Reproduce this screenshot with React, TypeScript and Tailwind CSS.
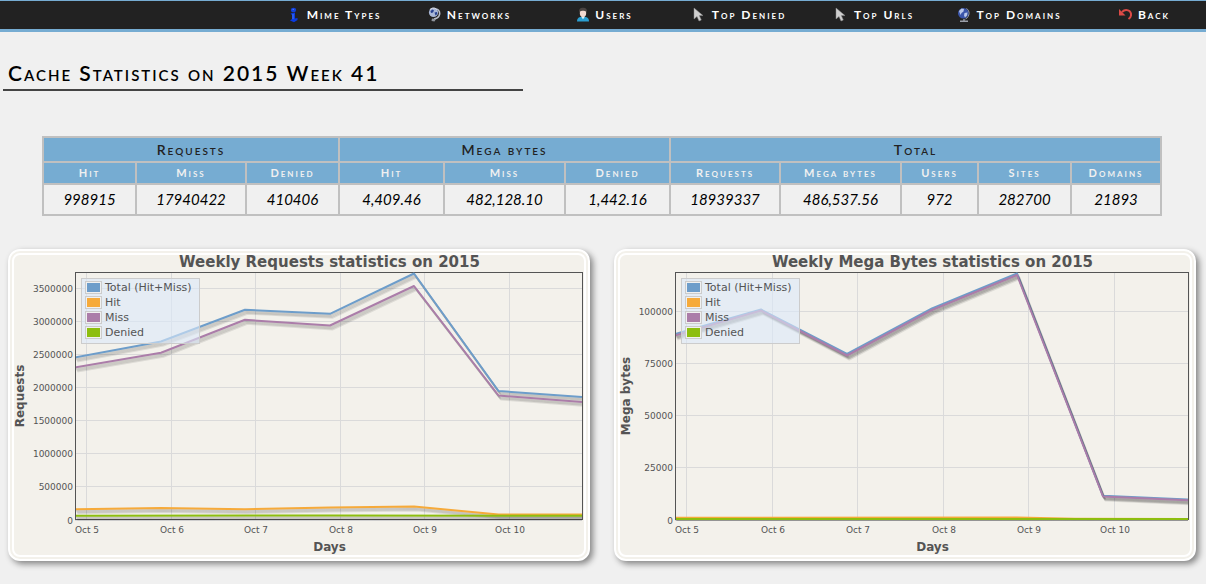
import { Fragment } from "react"

interface NavItem {
  name: string;
  icon: React.ReactNode;
}

interface Tick {
  pos: number;
  label: string;
}

interface Series {
  color: string;
  points: string;
}

interface ChartProps {
  title: string;
  yLabel: string;
  plotLeft: number;
  plotRight: number;
  xTicks: Tick[];
  yTicks: Tick[];
  series: Series[];
  legendClass: string;
}

const InfoIcon = () => (
  <svg width="14" height="16" viewBox="0 0 14 16" aria-hidden="true">
    <ellipse cx="5.500" cy="3" rx="2.600" ry="2.300" fill="#1240d8" />
    <path d="M2.500 6.500L7 5.500v6l2.500-.5v2L6 15.300 2 13.500l2-1.500V8z" fill="#0a3be0" />
    <path d="M4.500 2.400h1.500M5 7v5" stroke="#4a78f5" strokeWidth="1" />
  </svg>
)

const NetworkIcon = () => (
  <svg width="14" height="16" viewBox="0 0 14 16" aria-hidden="true">
    <path d="M8.500 2c3 1 4 4 2.500 7-1 2-2.500 2.500-5 3" fill="none" stroke="#b9bec9" strokeWidth="1.600" />
    <circle cx="5.500" cy="5.500" r="4.600" fill="#a9b7d6" />
    <path d="M2.500 4l2-1.500 1.500 1-1 2-2 .5zM6.500 5.500l2.500-.5.3 2-1.800 1.500z" fill="#27418f" />
    <path d="M2 2.500c2-2 5-2 7 0" stroke="#eef2fa" fill="none" />
    <path d="M4 11.500l4 .5-1.500 2.500-3-.5z" fill="#8f949c" />
  </svg>
)

const UserIcon = () => (
  <svg width="14" height="16" viewBox="0 0 14 16" aria-hidden="true">
    <path d="M1 14.500c0-3.500 2-4.700 6-4.700s6 1.200 6 4.700z" fill="#2b9ed0" />
    <path d="M5 9.500h4l-2 2.800z" fill="#d8f0fa" />
    <ellipse cx="7" cy="6" rx="3.200" ry="4" fill="#f2d9d0" />
    <path d="M3.200 5.500C2.500 2 4.500.8 7 .8s4.700 1.200 3.800 4.700C9.800 3.800 8 3.800 7 3.800s-2.800 0-3.800 1.700z" fill="#4a4442" />
  </svg>
)

const CursorIcon = () => (
  <svg width="14" height="16" viewBox="0 0 14 16" aria-hidden="true">
    <path d="M1 1v11l3-2.500 2 4.500 2.300-1-2-4.400H10z" fill="#cfcfcf" stroke="#8a8a8a" strokeWidth=".5" />
  </svg>
)

const GlobeIcon = () => (
  <svg width="14" height="16" viewBox="0 0 14 16" aria-hidden="true">
    <path d="M3 14.300h8M7 12v2.500" stroke="#9ba0aa" strokeWidth="1.400" />
    <path d="M9.500 1.500c3.500 2 3.500 8-1 10.500" fill="none" stroke="#a4a9b4" />
    <circle cx="6.300" cy="6.300" r="5.300" fill="#3a55ab" />
    <path d="M2 4l2.500-2.500 2.500.5-.5 2.500-2 1.500-1 2zM7.500 6l3-.5-.5 3-2 2-1-2z" fill="#b8c6e8" />
  </svg>
)

const BackIcon = () => (
  <svg width="14" height="16" viewBox="0 0 14 16" aria-hidden="true">
    <path d="M3 5c3.500-3.500 9.500-2 9 3.300-.2 1.500-1 2.700-2.500 3.700" fill="none" stroke="#dc4a46" strokeWidth="2" />
    <path d="M0 2v6.500h6.500z" fill="#dc4a46" />
  </svg>
)

const navItems: NavItem[] = [
  { name: "Mime Types", icon: <InfoIcon /> },
  { name: "Networks", icon: <NetworkIcon /> },
  { name: "Users", icon: <UserIcon /> },
  { name: "Top Denied", icon: <CursorIcon /> },
  { name: "Top Urls", icon: <CursorIcon /> },
  { name: "Top Domains", icon: <GlobeIcon /> },
  { name: "Back", icon: <BackIcon /> },
]

const columns = [
  { name: "Hit", value: "998915", width: "w-[93px]" },
  { name: "Miss", value: "17940422", width: "w-[110px]" },
  { name: "Denied", value: "410406", width: "w-[93px]" },
  { name: "Hit", value: "4,409.46", width: "w-[105px]" },
  { name: "Miss", value: "482,128.10", width: "w-[121px]" },
  { name: "Denied", value: "1,442.16", width: "w-[105px]" },
  { name: "Requests", value: "18939337", width: "w-[110px]" },
  { name: "Mega bytes", value: "486,537.56", width: "w-[121px]" },
  { name: "Users", value: "972", width: "w-[77px]" },
  { name: "Sites", value: "282700", width: "w-[93px]" },
  { name: "Domains", value: "21893", width: "w-[90px]" },
]

const legend = [
  { name: "Total (Hit+Miss)", color: "bg-[#6d9dca]" },
  { name: "Hit", color: "bg-[#f6aa3a]" },
  { name: "Miss", color: "bg-[#ab7da9]" },
  { name: "Denied", color: "bg-[#8dbe0f]" },
]

const charts: ChartProps[] = [
  {
    title: "Weekly Requests statistics on 2015",
    yLabel: "Requests",
    plotLeft: 61,
    plotRight: 568,
    legendClass: "left-[67px]",
    xTicks: [
      { pos: 72, label: "Oct 5" },
      { pos: 157, label: "Oct 6" },
      { pos: 241, label: "Oct 7" },
      { pos: 326, label: "Oct 8" },
      { pos: 410, label: "Oct 9" },
      { pos: 495, label: "Oct 10" },
    ],
    yTicks: [
      { pos: 33, label: "3500000" },
      { pos: 66, label: "3000000" },
      { pos: 99, label: "2500000" },
      { pos: 132, label: "2000000" },
      { pos: 165, label: "1500000" },
      { pos: 198, label: "1000000" },
      { pos: 231, label: "500000" },
      { pos: 265, label: "0" },
    ],
    series: [
      { color: "#6d9dca", points: "61,102.500 147,86.500 231,54.800 316,58.800 400,18.500 484.500,136 568,142" },
      { color: "#f6aa3a", points: "61,254.300 147,253 231,254.200 316,252.500 400,251.500 484.500,259.500 568,259.500" },
      { color: "#ab7da9", points: "61,112.500 147,97.800 231,64.800 316,70.500 400,31 484.500,140.500 568,147" },
      { color: "#8dbe0f", points: "61,260.800 316,260.500 568,260.800" },
    ],
  },
  {
    title: "Weekly Mega Bytes statistics on 2015",
    yLabel: "Mega bytes",
    plotLeft: 55,
    plotRight: 568,
    legendClass: "left-[61px]",
    xTicks: [
      { pos: 66, label: "Oct 5" },
      { pos: 152, label: "Oct 6" },
      { pos: 237, label: "Oct 7" },
      { pos: 323, label: "Oct 8" },
      { pos: 408, label: "Oct 9" },
      { pos: 494, label: "Oct 10" },
    ],
    yTicks: [
      { pos: 56, label: "100000" },
      { pos: 108, label: "75000" },
      { pos: 160, label: "50000" },
      { pos: 212, label: "25000" },
      { pos: 265, label: "0" },
    ],
    series: [
      { color: "#6d9dca", points: "55,79 141,54.500 227,99 312,53.500 397,18.500 483,240.800 568,244.500" },
      { color: "#f6aa3a", points: "55,262.700 397,262.500 455,263.700 568,264" },
      { color: "#ab7da9", points: "55,80.500 141,55.500 227,100.500 312,55 397,20 483,241.500 568,245.300" },
      { color: "#8dbe0f", points: "55,264 568,264" },
    ],
  },
]

function Chart ({ title, yLabel, plotLeft, plotRight, xTicks, yTicks, series, legendClass }: ChartProps) {
  const middle = (plotLeft + plotRight) / 2

  return (
    <section className="relative border-[6px] border-double border-white rounded-xl bg-[#f3f1eb] shadow-[3px_3px_6px_rgba(0,0,0,0.45)]">
      <svg className="block w-full overflow-visible" viewBox="0 0 570 300" fill="#545454" fontFamily="'DejaVu Sans', sans-serif" role="img" aria-label={title}>
        <text x={middle + 1} y="12" textAnchor="middle" fontSize="15" fontWeight="bold">{title}</text>
        <text x={middle + 1} y="296" textAnchor="middle" fontSize="12" fontWeight="bold">Days</text>
        <text transform="translate(10 141) rotate(-90)" textAnchor="middle" fontSize="12" fontWeight="bold">{yLabel}</text>

        {xTicks.map((tick) => (
          <Fragment key={tick.label}>
            <path d={`M${tick.pos + 0.5} 18V265`} stroke="#dadada" />
            <text x={tick.pos + 1} y="278" textAnchor="middle" fontSize="9">{tick.label}</text>
          </Fragment>
        ))}
        {yTicks.map((tick) => (
          <Fragment key={tick.label}>
            <path d={`M${plotLeft} ${tick.pos + 0.5}H${plotRight}`} stroke="#dadada" />
            <text x={plotLeft - 2} y={tick.pos + 4} textAnchor="end" fontSize="9">{tick.label}</text>
          </Fragment>
        ))}

        <rect x={plotLeft + 0.5} y="17.500" width={plotRight - plotLeft} height="247" fill="none" stroke="#545454" />

        <svg x={plotLeft + 1} y="17" width={plotRight - plotLeft - 1} height="249" viewBox={`${plotLeft + 1} 17 ${plotRight - plotLeft - 1} 249`}>
          {series.map((line) => (
            <g key={line.color} fill="none" strokeWidth="2" strokeLinejoin="round">
              {[1, 2, 3, 4].map((step) => (
                <polyline key={step} points={line.points} transform={`translate(${step * 0.6} ${step})`} stroke="#000" strokeOpacity=".09" />
              ))}
              <polyline points={line.points} stroke={line.color} />
            </g>
          ))}
        </svg>
      </svg>

      <ul className={`absolute top-[23px] flex flex-col w-[119px] h-[66px] gap-[2px] pt-[2px] pl-[3px] border border-[#ccc] bg-[#dce9fa]/60 font-['DejaVu_Sans',sans-serif] text-[11px] leading-[13px] text-[#545454] ${legendClass}`}>
        {legend.map((item) => (
          <li key={item.name} className="flex items-center gap-[3px] whitespace-nowrap">
            <span className="w-[17px] h-[13px] p-px border border-[#ccc] bg-[#f0f0f0]">
              <span className={`block w-full h-full ${item.color}`} />
            </span>
            {item.name}
          </li>
        ))}
      </ul>
    </section>
  )
}

export default function App () {
  return (
    <div className="min-h-screen bg-[#f0f0f0] font-[Lato,sans-serif] text-black">
      <nav className="flex justify-end h-8 gap-3 bg-[#222] border-t border-b-[3px] border-[#76acd2]">
        {navItems.map((item) => (
          <a key={item.name} href="#" className="flex items-center justify-center w-[123px] gap-[5px] text-[12px] font-bold tracking-[2px] text-white whitespace-nowrap [font-variant:small-caps]">
            {item.icon}
            {item.name}
          </a>
        ))}
      </nav>

      <h1 className="w-[520px] max-w-full mt-7 ml-[3px] pl-[5px] pb-1 border-b-2 border-[#444] text-[21px] leading-[25px] font-semibold tracking-[2px] whitespace-nowrap [font-variant:small-caps]">
        Cache Statistics on 2015 Week 41
      </h1>

      <div className="pl-[42px] pr-[44px] mt-[45px]">
        <table className="w-full text-center border-collapse table-fixed [&_td]:border-2 [&_th]:border-2 [&_td]:border-[#c0c0c0] [&_th]:border-[#c0c0c0]">
          <colgroup>
            {columns.map((column, i) => <col key={i} className={column.width} />)}
          </colgroup>
          <thead className="bg-[#76acd2] [font-variant:small-caps]">
            <tr className="h-[25px] text-[14px] leading-[21px] tracking-[2px] text-[#222]">
              <th colSpan={3} className="font-semibold">Requests</th>
              <th colSpan={3} className="font-semibold">Mega bytes</th>
              <th colSpan={5} className="font-semibold">Total</th>
            </tr>
            <tr className="h-[22px] text-[11px] leading-[18px] tracking-[2px] text-[#f0f0f0]">
              {columns.map((column, i) => <th key={i} className="font-bold">{column.name}</th>)}
            </tr>
          </thead>
          <tbody>
            <tr className="h-[31px] text-[15px] leading-[26px] italic">
              {columns.map((column, i) => <td key={i} className="pb-[2px]">{column.value}</td>)}
            </tr>
          </tbody>
        </table>
      </div>

      <main className="grid grid-cols-2 gap-6 pt-[33px] pb-[22px] pl-2 pr-[10px]">
        {charts.map((chart) => <Chart key={chart.title} {...chart} />)}
      </main>
    </div>
  )
}
